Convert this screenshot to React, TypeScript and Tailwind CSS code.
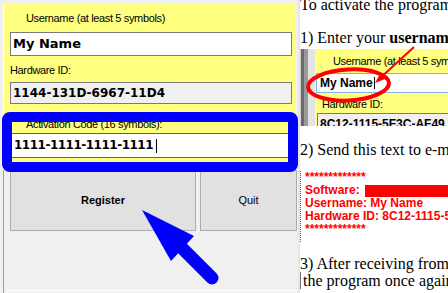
import React from 'react';

const dejavu = "font-['DejaVu_Sans',Verdana,sans-serif]";

const ActivationForm: React.FC = () => {
  return (
    <div className="flex w-[298px] shrink-0 flex-col bg-[#f0f0f0] pl-[3px] pt-[4px]">
      {/* Yellow form area */}
      <div className="h-[166px] w-[292px] border-l border-white bg-[#ffff80] pl-[6px] pt-[8px] text-[11px] leading-[13px] tracking-[-0.35px] text-black">
        <div className="pl-[16px]">Username (at least 5 symbols)</div>
        <div className={`mt-[7px] h-[24px] w-[282px] border border-[#7a7a7a] bg-white pl-[2px] text-[13px] font-bold leading-[22px] tracking-normal ${dejavu}`}>
          My Name
        </div>
        <div className="mt-[8px]">Hardware ID:</div>
        <div className={`mt-[5px] h-[22px] w-[282px] border border-[#7a7a7a] bg-[#f0f0f0] pl-[2px] text-[12px] font-bold leading-[20px] tracking-normal ${dejavu}`}>
          1144-131D-6967-11D4
        </div>
        <div className="mt-[14px] pl-[16px]">Activation Code (16 symbols):</div>
        <div className={`mt-[2px] flex h-[25px] w-[282px] items-center border border-[#0078d7] bg-white pl-[3px] text-[12px] font-bold leading-[23px] tracking-[-0.5px] ${dejavu}`}>
          <span>1111-1111-1111-1111</span>
          <span className="ml-[3px] h-[14px] w-px bg-black" />
        </div>
      </div>

      {/* Buttons */}
      <div className="flex flex-1 flex-col border-l border-[#a0a0a0]">
        <div className="flex gap-[4px] pl-[6px] text-[11px] text-black">
          <button className="flex h-[61px] w-[186px] items-center justify-center border border-[#adadad] bg-[#e1e1e1] font-bold">
            Register
          </button>
          <button className="flex h-[61px] w-[97px] items-center justify-center border border-[#adadad] bg-[#e1e1e1]">
            Quit
          </button>
        </div>
        <div className="mt-auto ml-[3px] h-[3px] border-t border-l border-white" />
      </div>
    </div>
  );
};

const HelpPage: React.FC = () => {
  return (
    <div className="relative h-[293px] w-[150px] shrink-0 overflow-hidden border-l-2 border-[#e6e6e6] bg-white font-['Liberation_Serif','Times_New_Roman',serif] text-[16px] leading-[17px] text-black">
      <p className="-mt-[4px] whitespace-nowrap">To activate the program</p>
      <p className="mt-[16px] whitespace-nowrap">
        1) Enter your <b>username</b>
      </p>

      {/* Embedded screenshot of the form */}
      <div className="-ml-[2px] mt-[3px] flex h-[77px] overflow-hidden font-['Liberation_Sans',Arial,sans-serif] text-[11px] leading-[13px] tracking-[-0.35px]">
        <span className="w-[3px] shrink-0 bg-[#cfcfcf]" />
        <span className="w-[3px] shrink-0 bg-[#6a6a6a]" />
        <span className="w-[4px] shrink-0 bg-[#9a9a9a]" />
        <span className="w-[7px] shrink-0 bg-[#e4e4e4]" />
        <div className="min-w-0 flex-1 bg-[#ffff80] pt-[6px]">
          <div className="whitespace-nowrap pl-[18px]">Username (at least 5 symbols)</div>
          <div className="ml-[1px] mt-[5px] flex h-[20px] w-[140px] items-center border border-[#7eb4ea] bg-white pl-[3px] text-[12px] font-bold tracking-normal">
            <span>My Name</span>
            <span className="ml-[1px] h-[12px] w-px bg-black" />
          </div>
          <div className="mt-[5px] pl-[7px]">Hardware ID:</div>
          <div className="ml-[2px] mt-[2px] h-[20px] w-[140px] whitespace-nowrap border border-[#7a7a7a] bg-[#f0f0f0] pl-[2px] pt-[4px] text-[12px] font-bold tracking-normal">
            8C12-1115-5F3C-AF49
          </div>
        </div>
      </div>

      <p className="mt-[15px] whitespace-nowrap">2) Send this text to e-mail</p>

      <div className="mt-[13px] whitespace-nowrap border-l border-dotted border-[#606060] pl-[4px] font-['Liberation_Sans',Arial,sans-serif] text-[12px] font-bold leading-[13px] text-[#ff0000]">
        <div>*************</div>
        <div className="flex items-center">
          <span>Software:</span>
          <span className="ml-[5px] h-[12px] w-[90px] bg-[#ff0000]" />
        </div>
        <div>Username: My Name</div>
        <div>Hardware ID: 8C12-1115-5F3C</div>
        <div className="pb-[6px]">*************</div>
      </div>

      <p className="mt-[13px] whitespace-nowrap">3) After receiving from</p>
      <p className="-ml-[2px] whitespace-nowrap border-l-[3px] border-[#707070] pl-[2px]">the program once again</p>

      {/* Annotation: red circle and pointer */}
      <svg className="pointer-events-none absolute left-[-2px] top-0" width="150" height="130" viewBox="0 0 150 130">
        <ellipse cx="50.5" cy="85" rx="40.5" ry="15.5" fill="none" stroke="#ff0000" strokeWidth="4" transform="rotate(-3 50.5 85)" />
        <line x1="116" y1="47" x2="80" y2="80" stroke="#ff0000" strokeWidth="2" />
        <polygon points="77,83 82,74 87,79" fill="#ff0000" />
      </svg>
    </div>
  );
};

export default function App() {
  return (
    <div className="relative flex h-[293px] w-[448px] overflow-hidden bg-white font-['Liberation_Sans',Arial,sans-serif]">
      <ActivationForm />
      <HelpPage />

      {/* Blue highlight around the activation code */}
      <div className="pointer-events-none absolute left-[2px] top-[112px] h-[60px] w-[296px] rounded-[8px] border-[10px] border-[#0000ff]" />

      {/* Blue arrow pointing at Register */}
      <svg className="pointer-events-none absolute left-0 top-0" width="298" height="293" viewBox="0 0 298 293">
        <polygon points="142,210 194,236 171,261" fill="#0000ff" />
        <line x1="181" y1="247" x2="212" y2="278" stroke="#0000ff" strokeWidth="13" strokeLinecap="round" />
      </svg>
    </div>
  );
}
